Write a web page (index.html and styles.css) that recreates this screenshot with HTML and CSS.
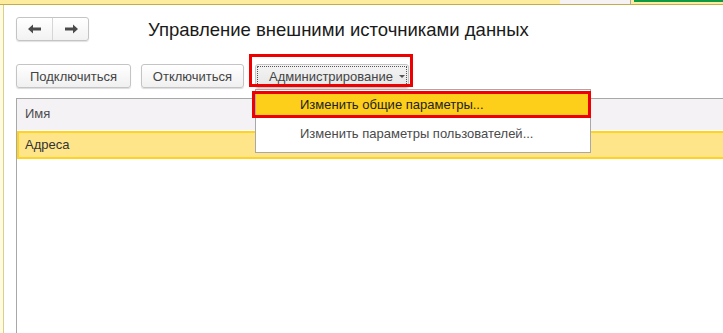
FILE: index.html
```html
<!DOCTYPE html>
<html lang="ru">
<head>
    <meta charset="UTF-8">
    <title>Управление внешними источниками данных</title>
    <link rel="stylesheet" href="styles.css">
</head>
<body>

    <!-- Верхняя полоса с вкладками -->
    <div class="top-bar">
        <div class="top-tab"></div>
        <div class="top-green"></div>
    </div>

    <div class="workspace">
        <div class="side-strip"></div>

        <div class="form">
            <!-- Заголовок формы -->
            <div class="form-head">
                <div class="nav-buttons">
                    <button class="nav-btn">
                        <svg width="14" height="10" viewBox="0 0 14 10"><path d="M0 5 L5 0.5 L5 3.5 L13 3.5 L13 6.5 L5 6.5 L5 9.5 Z" fill="#4a4a4a"/></svg>
                    </button>
                    <button class="nav-btn">
                        <svg width="14" height="10" viewBox="0 0 14 10"><path d="M14 5 L9 0.5 L9 3.5 L1 3.5 L1 6.5 L9 6.5 L9 9.5 Z" fill="#4a4a4a"/></svg>
                    </button>
                </div>
                <h1>Управление внешними источниками данных</h1>
            </div>

            <!-- Командная панель -->
            <div class="toolbar">
                <button class="btn btn-connect">Подключиться</button>
                <button class="btn btn-disconnect">Отключиться</button>
                <div class="admin">
                    <button class="btn btn-admin">Администрирование <span class="arrow"></span></button>
                    <div class="mark mark-admin"></div>
                    <div class="menu">
                        <div class="menu-item active">Изменить общие параметры...</div>
                        <div class="menu-item">Изменить параметры пользователей...</div>
                        <div class="mark mark-item"></div>
                    </div>
                </div>
            </div>

            <!-- Таблица -->
            <div class="table">
                <div class="table-header">Имя</div>
                <div class="table-row selected">Адреса</div>
            </div>
        </div>
    </div>

</body>
</html>
```

FILE: styles.css
```css
/* Общие стили */
html, body {
    height: 100%;
}

body {
    margin: 0;
    font-family: Arial, "Liberation Sans", sans-serif;
    font-size: 13px;
    color: #333;
    background-color: #fff;
    display: flex;
    flex-direction: column;
    overflow: hidden;
}

/* Верхняя полоса */
.top-bar {
    height: 4px;
    background-color: #fdeb9e;
    border-bottom: 1px solid #c2ac4c;
    display: flex;
    justify-content: flex-end;
    flex-shrink: 0;
}

.top-tab {
    width: 70px;
    height: 4px;
    background-color: #f6f1f2;
    border-right: 1px solid #a9a9a9;
    margin-right: 3px;
}

.top-green {
    width: 89px;
    height: 2px;
    background-color: #0e9a44;
}

.workspace {
    flex: 1;
    display: flex;
}

.side-strip {
    width: 3px;
    background-color: #fffbe0;
    border-right: 1px solid #dccf8c;
    flex-shrink: 0;
}

.form {
    flex: 1;
    padding: 12px 0 0 12px;
    display: flex;
    flex-direction: column;
}

/* Заголовок */
.form-head {
    display: flex;
    align-items: center;
    height: 24px;
}

.nav-buttons {
    display: flex;
    width: 73px;
    height: 24px;
    box-sizing: border-box;
    border: 1px solid #c4c4c4;
    border-radius: 3px;
    background: linear-gradient(#ffffff, #f2f2f2);
    box-shadow: 0 1px 1px rgba(0, 0, 0, 0.12);
}

.nav-btn {
    flex: 1;
    border: none;
    background: none;
    padding: 0;
    display: flex;
    align-items: center;
    justify-content: center;
}

.nav-btn + .nav-btn {
    border-left: 1px solid #d6d6d6;
}

h1 {
    margin: 0 0 0 59px;
    font-size: 18.5px;
    font-weight: normal;
    color: #1a1a1a;
    position: relative;
    top: 1px;
}

/* Командная панель */
.toolbar {
    display: flex;
    margin-top: 23px;
    gap: 10px;
}

.btn {
    height: 24px;
    box-sizing: border-box;
    padding: 0;
    border: 1px solid #c4c4c4;
    border-radius: 3px;
    background: linear-gradient(#ffffff, #f0f0f0);
    box-shadow: 0 1px 1px rgba(0, 0, 0, 0.14);
    font-family: Arial, "Liberation Sans", sans-serif;
    font-size: 13px;
    color: #444;
    cursor: pointer;
}

.btn-connect {
    width: 115px;
}

.btn-disconnect {
    width: 103px;
}

.admin {
    position: relative;
    margin-left: 1px;
}

.btn-admin {
    width: 154px;
    padding: 0 10px 0 13px;
    background: linear-gradient(#f4f4f4, #e6e6e6);
    outline: 1px dotted #555;
    outline-offset: -3px;
    display: flex;
    align-items: center;
    gap: 6px;
}

.arrow {
    width: 0;
    height: 0;
    border-left: 3px solid transparent;
    border-right: 3px solid transparent;
    border-top: 3px solid #555;
    margin-top: 1px;
}

/* Красные пометки */
.mark {
    position: absolute;
    border: 3px solid #ee0000;
    box-sizing: border-box;
    pointer-events: none;
}

.mark-admin {
    left: -6px;
    top: -10px;
    width: 164px;
    height: 33px;
}

/* Выпадающее меню */
.menu {
    position: absolute;
    left: 0;
    top: 25px;
    width: 336px;
    box-sizing: border-box;
    background-color: #fff;
    border: 1px solid #a8a8a8;
    padding: 1px 0 0 0;
    z-index: 2;
}

.menu-item {
    height: 27px;
    line-height: 27px;
    padding-left: 44px;
    color: #4a4a4a;
}

.menu-item.active {
    background-color: #fecf1a;
    color: #222;
}

.menu-item + .menu-item {
    height: 34px;
    line-height: 32px;
}

.mark-item {
    left: -4px;
    top: 1px;
    width: 339px;
    height: 27px;
}

/* Таблица */
.table {
    flex: 1;
    margin-top: 10px;
    border-top: 1px solid #a8a8a8;
    border-left: 1px solid #a8a8a8;
}

.table-header {
    height: 31px;
    line-height: 30px;
    padding-left: 8px;
    background-color: #f5f2f5;
    color: #4d4d4d;
    border-bottom: 1px solid #ffffff;
}

.table-row {
    height: 28px;
    box-sizing: border-box;
    line-height: 24px;
    padding-left: 6px;
    color: #333;
}

.table-row.selected {
    background-color: #fee58a;
    border: 2px solid #fed322;
    border-right: none;
}
```
